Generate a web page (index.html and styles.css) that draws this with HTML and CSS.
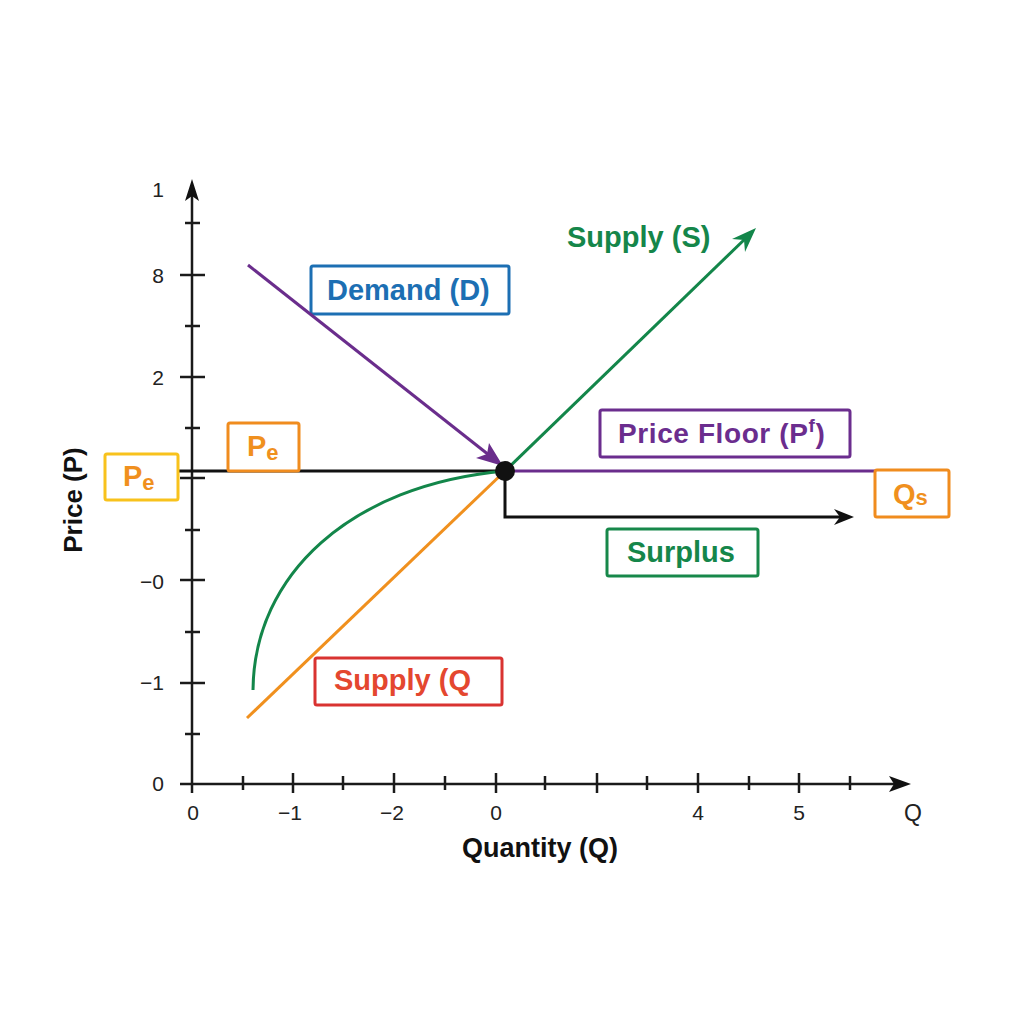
FILE: index.html
```html
<!DOCTYPE html>
<html lang="en">
<head>
<meta charset="utf-8">
<title>Price Floor Diagram</title>
<link rel="stylesheet" href="styles.css">
</head>
<body>
<div class="figure">
<svg class="chart" width="1024" height="1024" viewBox="0 0 1024 1024" xmlns="http://www.w3.org/2000/svg">
  <!-- axes -->
  <g class="axis">
    <line x1="192" y1="784" x2="192" y2="190"/>
    <line x1="180" y1="784" x2="898" y2="784"/>
    <!-- y minor ticks -->
    <line x1="185" y1="223" x2="200" y2="223"/>
    <line x1="185" y1="326" x2="200" y2="326"/>
    <line x1="185" y1="428" x2="200" y2="428"/>
    <line x1="185" y1="530" x2="200" y2="530"/>
    <line x1="185" y1="632" x2="200" y2="632"/>
    <line x1="185" y1="734" x2="200" y2="734"/>
    <!-- y major ticks -->
    <line x1="180" y1="275" x2="205" y2="275"/>
    <line x1="180" y1="377" x2="205" y2="377"/>
    <line x1="180" y1="478" x2="205" y2="478"/>
    <line x1="180" y1="580" x2="205" y2="580"/>
    <line x1="180" y1="683" x2="205" y2="683"/>
    <!-- x ticks -->
    <line x1="192" y1="784" x2="192" y2="793"/>
    <line x1="243" y1="776" x2="243" y2="790"/>
    <line x1="293" y1="773" x2="293" y2="793"/>
    <line x1="343" y1="776" x2="343" y2="790"/>
    <line x1="394" y1="773" x2="394" y2="793"/>
    <line x1="445" y1="776" x2="445" y2="790"/>
    <line x1="496" y1="773" x2="496" y2="793"/>
    <line x1="545" y1="776" x2="545" y2="790"/>
    <line x1="597" y1="773" x2="597" y2="793"/>
    <line x1="647" y1="776" x2="647" y2="790"/>
    <line x1="698" y1="773" x2="698" y2="793"/>
    <line x1="749" y1="776" x2="749" y2="790"/>
    <line x1="799" y1="773" x2="799" y2="793"/>
    <line x1="850" y1="776" x2="850" y2="790"/>
  </g>
  <path class="fill-black" d="M192,179 L199,201 L192,196 L185,201 Z"/>
  <path class="fill-black" d="M911,784 L889,792 L894,784 L889,776 Z"/>

  <!-- tick labels -->
  <g class="tick-y">
    <text x="164" y="197">1</text>
    <text x="164" y="283">8</text>
    <text x="164" y="385">2</text>
    <text x="164" y="589">−0</text>
    <text x="164" y="690">−1</text>
    <text x="164" y="791">0</text>
  </g>
  <g class="tick-x">
    <text x="193" y="820">0</text>
    <text x="290" y="820">−1</text>
    <text x="392" y="820">−2</text>
    <text x="496" y="820">0</text>
    <text x="698" y="820">4</text>
    <text x="799" y="820">5</text>
    <text x="913" y="821" class="q-end">Q</text>
  </g>
  <text class="axis-title title-x" x="540" y="857">Quantity (Q)</text>
  <text class="axis-title" transform="translate(82 500) rotate(-90)">Price (P)</text>

  <!-- equilibrium price line -->
  <line class="line-black" x1="178" y1="471" x2="505" y2="471"/>
  <line class="line-purple" x1="505" y1="471" x2="875" y2="471"/>

  <!-- surplus arrow -->
  <path class="line-black" d="M505,471 L505,517 L842,517"/>
  <path class="fill-black" d="M854,517 L834,525 L840,517 L834,509 Z"/>

  <!-- curves -->
  <path class="line-green" d="M253,690 C254,575 350,485 505,471"/>
  <line class="line-orange" x1="247" y1="718" x2="505" y2="471"/>
  <line class="line-green" x1="505" y1="471" x2="747" y2="237"/>
  <path class="fill-green" d="M756,228 L732,239 L744,240 L745,252 Z"/>

  <!-- label boxes -->
  <rect class="box box-blue" x="311" y="266" width="198" height="48" rx="2"/>
  <text class="label lbl-blue" x="327" y="300">Demand (D)</text>

  <line class="line-purple" x1="248" y1="265" x2="494" y2="459"/>
  <path class="fill-purple" d="M503,466 L476,458 L487,454 L489,443 Z"/>

  <text class="label lbl-green" x="567" y="247">Supply (S)</text>

  <rect class="box box-purple" x="600" y="410" width="250" height="47" rx="2"/>
  <text class="label lbl-purple floor" x="618" y="443">Price Floor (P<tspan class="sup" dy="-11">f</tspan><tspan dy="11">)</tspan></text>

  <rect class="box box-orange" x="875" y="470" width="74" height="47" rx="2"/>
  <text class="label lbl-orange" x="893" y="504">Q<tspan class="sub" dy="1">s</tspan></text>

  <rect class="box box-green" x="607" y="529" width="151" height="47" rx="2"/>
  <text class="label lbl-green" x="627" y="562">Surplus</text>

  <rect class="box box-orange" x="228" y="423" width="71" height="48" rx="2"/>
  <text class="label lbl-orange" x="247" y="456">P<tspan class="sub" dy="4">e</tspan></text>

  <rect class="box box-yellow" x="105" y="454" width="73" height="46" rx="2"/>
  <text class="label lbl-orange" x="123" y="486">P<tspan class="sub" dy="4">e</tspan></text>

  <rect class="box box-red" x="315" y="658" width="187" height="47" rx="2"/>
  <text class="label lbl-red" x="334" y="690">Supply (Q</text>

  <circle class="fill-black" cx="505" cy="471" r="10"/>
</svg>
</div>
</body>
</html>
```

FILE: styles.css
```css
html, body {
  margin: 0;
  padding: 0;
  background: #ffffff;
}

.figure {
  width: 1024px;
  height: 1024px;
}

.chart {
  display: block;
  font-family: "Liberation Sans", Arial, sans-serif;
}

.axis line {
  stroke: #1a1a1a;
  stroke-width: 2.5;
}

.fill-black { fill: #111111; }
.fill-green { fill: #13864a; }
.fill-purple { fill: #6a2d8c; }

.line-black,
.line-purple,
.line-green,
.line-orange {
  fill: none;
  stroke-width: 3;
}
.line-black { stroke: #111111; }
.line-purple { stroke: #6a2d8c; }
.line-green { stroke: #13864a; }
.line-orange { stroke: #f0901e; }

.tick-y text,
.tick-x text {
  font-size: 21px;
  fill: #222222;
}
.tick-y text { text-anchor: end; }
.tick-x text { text-anchor: middle; }
.tick-x .q-end { font-size: 23px; }

.axis-title {
  font-size: 26px;
  font-weight: bold;
  fill: #111111;
  text-anchor: middle;
}
.title-x { font-size: 27px; }

.box {
  fill: #ffffff;
  stroke-width: 3;
}
.box-blue { stroke: #1c6fb3; }
.box-purple { stroke: #6b2d8e; }
.box-orange { stroke: #f08c1e; }
.box-green { stroke: #17884a; }
.box-yellow { stroke: #f8c21c; }
.box-red { stroke: #d93331; }

.label {
  font-size: 29px;
  font-weight: bold;
}
.label.floor {
  font-size: 28px;
  letter-spacing: 0.6px;
}
.sub { font-size: 22px; }
.sup { font-size: 19px; }

.lbl-blue { fill: #1c6fb3; }
.lbl-green { fill: #15864a; }
.lbl-purple { fill: #6b2d8e; }
.lbl-orange { fill: #f0901e; }
.lbl-red { fill: #e4472f; }
```
